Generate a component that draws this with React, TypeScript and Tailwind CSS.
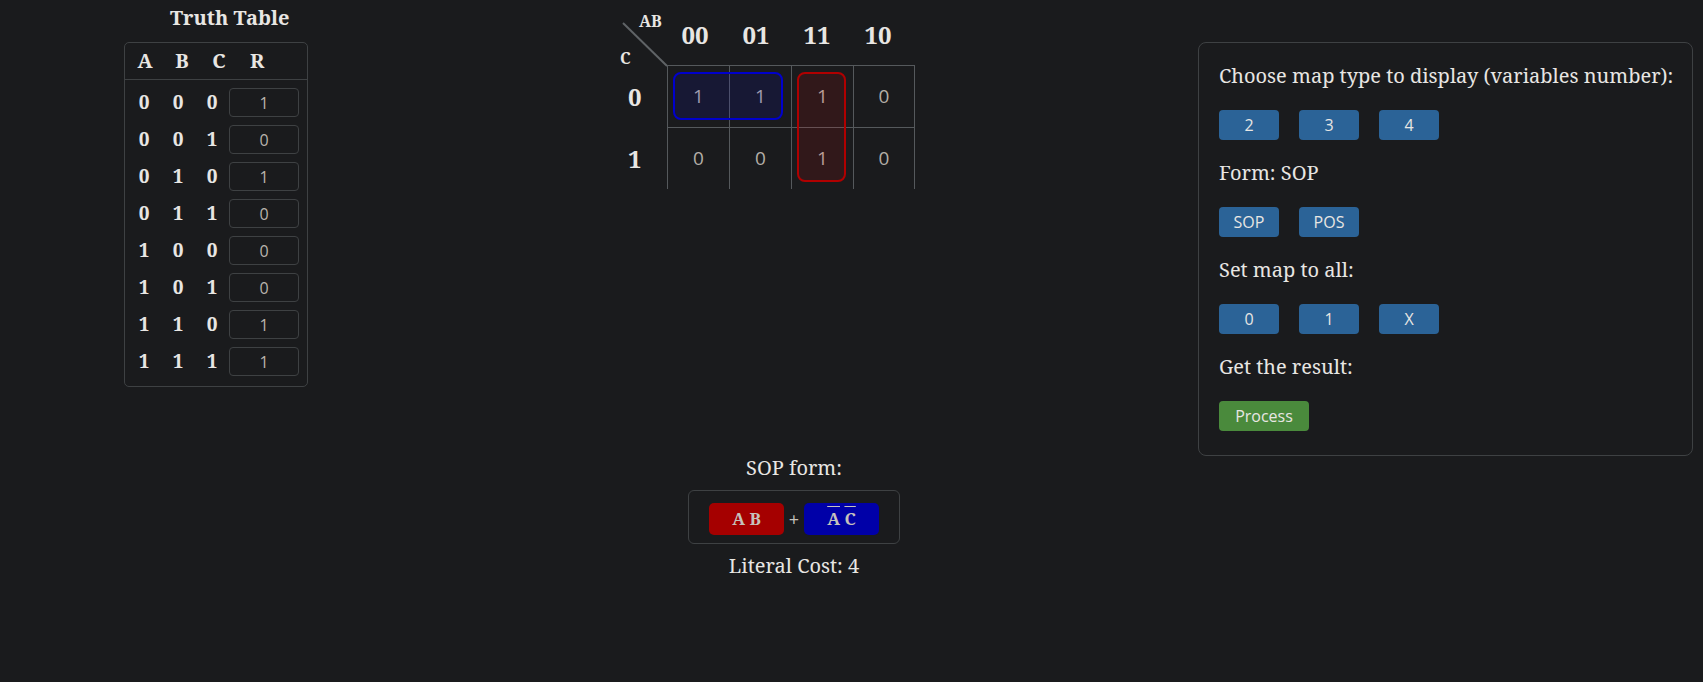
const serif = "font-['Noto_Serif','DejaVu_Serif',serif]";
const sans = "font-['Open_Sans','Noto_Sans',sans-serif]";

const truth = [
  ["0", "0", "0", "1"],
  ["0", "0", "1", "0"],
  ["0", "1", "0", "1"],
  ["0", "1", "1", "0"],
  ["1", "0", "0", "0"],
  ["1", "0", "1", "0"],
  ["1", "1", "0", "1"],
  ["1", "1", "1", "1"],
];

const kmap = [
  ["1", "1", "1", "0"],
  ["0", "0", "1", "0"],
];

function TruthTable() {
  return (
    <div className="ml-[124px] w-[184px] shrink-0">
      <h3 className={`${serif} pl-[46px] pt-[6px] text-[20px] font-bold leading-[24px] text-[#e8e6e3]`}>Truth Table</h3>
      <div className="mt-[12px] rounded-[5px] border border-[#3e4143]">
        <div className={`${serif} flex h-[37px] items-center border-b border-[#3e4143] text-[20px] font-bold text-[#e8e6e3]`}>
          <span className="w-[40px] text-center">A</span>
          <span className="w-[34px] text-center">B</span>
          <span className="w-[40px] text-center">C</span>
          <span className="w-[36px] text-center">R</span>
        </div>
        <div className="pt-[4px] pb-[6px]">
          {truth.map((r, i) => (
            <div key={i} className="flex h-[37px] items-center pl-[2px]">
              {r.slice(0, 3).map((v, j) => (
                <span key={j} className={`${serif} w-[34px] text-center text-[19px] font-bold text-[#e8e6e3]`}>{v}</span>
              ))}
              <input
                readOnly
                value={r[3]}
                className={`${sans} h-[29px] w-[70px] rounded-[4px] border border-[#3e4143] bg-transparent text-center text-[16px] font-normal text-[#b9b4ad] outline-none`}
              />
            </div>
          ))}
        </div>
      </div>
    </div>
  );
}

function KMap() {
  return (
    <div className="self-start">
      <div className="flex h-[65px]">
        <div className="relative w-[47px]">
          <svg className="absolute inset-0 overflow-visible" width="47" height="65">
            <line x1="3" y1="23" x2="47" y2="66" stroke="#5f6366" strokeWidth="2" />
          </svg>
          <span className={`${serif} absolute left-[19px] top-[13px] text-[16px] font-bold leading-[16px] text-[#e8e6e3]`}>AB</span>
          <span className={`${serif} absolute left-[0px] top-[50px] text-[16px] font-bold leading-[16px] text-[#e8e6e3]`}>C</span>
        </div>
        {["00", "01", "11", "10"].map((l) => (
          <div key={l} className={`${serif} w-[61px] pt-[19px] pr-[5px] text-center text-[24px] font-bold leading-[32px] text-[#e8e6e3]`}>{l}</div>
        ))}
      </div>
      <div className="flex">
        <div className="w-[47px]">
          {["0", "1"].map((l) => (
            <div key={l} className={`${serif} flex h-[62px] items-center pl-[8px] pt-[2px] text-[24px] font-bold text-[#e8e6e3]`}>{l}</div>
          ))}
        </div>
        <div className="relative">
          {kmap.map((row, i) => (
            <div key={i} className="flex">
              {row.map((v, j) => (
                <div
                  key={j}
                  className={`${sans} flex h-[62px] w-[62px] items-center justify-center border-t border-l border-[#55595c] text-[19px] text-[#b3aea7] ${j === 3 ? "border-r" : ""}`}
                >
                  {v}
                </div>
              ))}
            </div>
          ))}
          <div className="absolute left-[6px] top-[7px] h-[48px] w-[110px] rounded-[8px] border-2 border-[#0000cc] bg-[#0000ff]/10" />
          <div className="absolute left-[130px] top-[7px] h-[110px] w-[49px] rounded-[8px] border-2 border-[#b00000] bg-[#ff0000]/10" />
        </div>
      </div>
    </div>
  );
}

function Result() {
  return (
    <div className="mt-[265px] flex flex-col items-center self-center">
      <p className={`${serif} text-[20px] leading-[28px] text-[#e8e6e3]`}>SOP form:</p>
      <div className="mt-[8px] flex items-center rounded-[6px] border border-[#3e4143] px-[20px] pt-[12px] pb-[8px]">
        <span className={`${serif} flex h-[32px] w-[75px] items-center justify-center rounded-[5px] bg-[#a50000] text-[17px] font-bold text-[#c6c2bc]`}>A&nbsp;B</span>
        <span className={`${sans} w-[20px] text-center text-[18px] text-[#c6c2bc]`}>+</span>
        <span className={`${serif} flex h-[32px] w-[75px] items-center justify-center rounded-[5px] bg-[#0000a8] text-[17px] font-bold text-[#c6c2bc]`}>
          <span className="overline">A</span>&nbsp;<span className="overline">C</span>
        </span>
      </div>
      <p className={`${serif} mt-[8px] text-[20px] leading-[28px] text-[#e8e6e3]`}>Literal Cost: 4</p>
    </div>
  );
}

function Btn({ children, wide, green }: { children: string; wide?: boolean; green?: boolean }) {
  return (
    <button
      className={`${sans} h-[30px] rounded-[4px] text-[16px] text-[#e8e6e3] ${wide ? "w-[90px]" : "w-[60px]"} ${green ? "bg-[#4a8a3c]" : "bg-[#2b6397]"}`}
    >
      {children}
    </button>
  );
}

function Panel() {
  return (
    <div className="ml-[230px] mt-[42px] h-[414px] w-[495px] shrink-0 rounded-[8px] border border-[#3e4143] pl-[20px] pt-[19px]">
      <p className={`${serif} text-[20px] leading-[28px] text-[#e8e6e3]`}>Choose map type to display (variables number):</p>
      <div className="mt-[20px] flex gap-[20px]">
        <Btn>2</Btn>
        <Btn>3</Btn>
        <Btn>4</Btn>
      </div>
      <p className={`${serif} mt-[19px] text-[20px] leading-[28px] text-[#e8e6e3]`}>Form: SOP</p>
      <div className="mt-[20px] flex gap-[20px]">
        <Btn>SOP</Btn>
        <Btn>POS</Btn>
      </div>
      <p className={`${serif} mt-[19px] text-[20px] leading-[28px] text-[#e8e6e3]`}>Set map to all:</p>
      <div className="mt-[20px] flex gap-[20px]">
        <Btn>0</Btn>
        <Btn>1</Btn>
        <Btn>X</Btn>
      </div>
      <p className={`${serif} mt-[19px] text-[20px] leading-[28px] text-[#e8e6e3]`}>Get the result:</p>
      <div className="mt-[20px] flex">
        <Btn wide green>Process</Btn>
      </div>
    </div>
  );
}

export default function App() {
  return (
    <div className="flex h-[682px] w-full items-start bg-[#1a1b1d]">
      <TruthTable />
      <div className="ml-[312px] flex w-[348px] shrink-0 flex-col">
        <KMap />
        <Result />
      </div>
      <Panel />
    </div>
  );
}
